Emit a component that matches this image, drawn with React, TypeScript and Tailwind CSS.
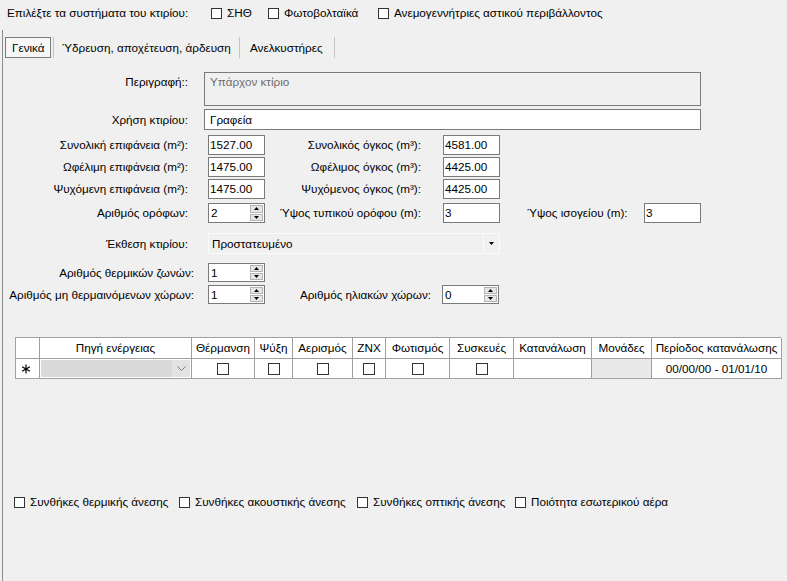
import React from 'react';

const Check: React.FC<{ className?: string }> = ({ className = '' }) => (
  <span className={`inline-block h-[11px] w-[11px] shrink-0 border border-[#333333] bg-white ${className}`} />
);

const CheckItem: React.FC<{ label: string; width: string }> = ({ label, width }) => (
  <div className={`flex items-center ${width}`}>
    <Check />
    <span className="ml-[5px] whitespace-nowrap">{label}</span>
  </div>
);

const TextBox: React.FC<{ value: string; className?: string }> = ({ value, className = '' }) => (
  <div className={`flex h-full items-center border border-[#7a7a7a] bg-white pl-[1px] ${className}`}>
    {value}
  </div>
);

const Spinner: React.FC<{ value: string; className?: string }> = ({ value, className = '' }) => (
  <div className={`flex h-full w-[57px] border border-[#7a7a7a] bg-white ${className}`}>
    <div className="flex flex-1 items-center pl-[2px]">{value}</div>
    <div className="my-[1px] mr-[1px] flex w-[13px] flex-col gap-px">
      <div className="flex flex-1 items-center justify-center border border-[#b4b4b4] bg-[#e6e6e6]">
        <svg width="5" height="3" viewBox="0 0 5 3">
          <path d="M2.5 0L5 3H0z" fill="#000" />
        </svg>
      </div>
      <div className="flex flex-1 items-center justify-center border border-[#b4b4b4] bg-[#e6e6e6]">
        <svg width="5" height="3" viewBox="0 0 5 3">
          <path d="M0 0H5L2.5 3z" fill="#000" />
        </svg>
      </div>
    </div>
  </div>
);

const columns = [
  { title: '', w: 'w-[24px]' },
  { title: 'Πηγή ενέργειας', w: 'w-[152px]' },
  { title: 'Θέρμανση', w: 'w-[63px]' },
  { title: 'Ψύξη', w: 'w-[38px]' },
  { title: 'Αερισμός', w: 'w-[60px]' },
  { title: 'ZNX', w: 'w-[33px]' },
  { title: 'Φωτισμός', w: 'w-[64px]' },
  { title: 'Συσκευές', w: 'w-[64px]' },
  { title: 'Κατανάλωση', w: 'w-[78px]' },
  { title: 'Μονάδες', w: 'w-[60px]' },
  { title: 'Περίοδος κατανάλωσης', w: 'w-[130px]' },
];

const EnergyGrid: React.FC = () => (
  <div className="ml-[12px] w-[766px] border-l border-t border-[#a0a0a0]">
    <div className="flex h-[21px]">
      {columns.map((c, i) => (
        <div
          key={i}
          className={`${c.w} flex shrink-0 items-center justify-center border-b border-r border-[#a0a0a0] bg-white whitespace-nowrap`}
        >
          {c.title}
        </div>
      ))}
    </div>
    <div className="flex h-[20px]">
      <div className="flex w-[24px] shrink-0 items-center justify-center border-b border-r border-[#a0a0a0] bg-white">
        <svg width="10" height="10" viewBox="0 0 10 10" className="-ml-[3px]">
          <path d="M5 0.5V9.5M1.1 2.7L8.9 7.3M1.1 7.3L8.9 2.7" stroke="#000" strokeWidth="1.2" />
        </svg>
      </div>
      <div className="flex w-[152px] shrink-0 border-b border-r border-[#a0a0a0] bg-white p-px">
        <div className="flex flex-1 items-center justify-end bg-[#d9d9d9]">
          <div className="flex h-full w-[18px] items-center justify-center bg-[#e3e3e3]">
            <svg width="9" height="5" viewBox="0 0 9 5">
              <path d="M0.5 0.5L4.5 4.5L8.5 0.5" stroke="#7d7d7d" fill="none" />
            </svg>
          </div>
        </div>
      </div>
      {columns.slice(2, 8).map((c, i) => (
        <div
          key={i}
          className={`${c.w} flex shrink-0 items-center justify-center border-b border-r border-[#a0a0a0] bg-white`}
        >
          <Check className="h-[12px] w-[12px]" />
        </div>
      ))}
      <div className="w-[78px] shrink-0 border-b border-r border-[#a0a0a0] bg-white" />
      <div className="w-[60px] shrink-0 border-b border-r border-[#a0a0a0] bg-[#e8e8e8]" />
      <div className="flex w-[130px] shrink-0 items-center justify-center border-b border-r border-[#a0a0a0] bg-white">
        00/00/00 - 01/01/10
      </div>
    </div>
  </div>
);

export default function App() {
  return (
    <div className="flex h-[581px] w-[787px] flex-col overflow-hidden bg-[#f0f0f0] font-['Liberation_Sans',Arial,sans-serif] text-[11.7px] leading-[14px] text-black">
      {/* systems row */}
      <div className="flex h-[26px] shrink-0 items-center pl-[7px]">
        <span className="w-[204px] whitespace-nowrap">Επιλέξτε τα συστήματα του κτιρίου:</span>
        <CheckItem label="ΣΗΘ" width="w-[57px]" />
        <CheckItem label="Φωτοβολταϊκά" width="w-[110px]" />
        <CheckItem label="Ανεμογεννήτριες αστικού περιβάλλοντος" width="w-[260px]" />
      </div>

      <div className="ml-[2px] mt-[4px] flex flex-1 flex-col border-l border-[#8c8c8c]">
        {/* tabs */}
        <div className="mt-[7px] flex h-[21px]">
          <div className="ml-[2px] flex w-[46px] items-center border border-[#7a7a7a] bg-[#f7f7f7] pl-[6px]">Γενικά</div>
          <div className="ml-[2px] w-px bg-[#c4c4c4]" />
          <div className="flex w-[185px] items-center pl-[8px] whitespace-nowrap">Ύδρευση, αποχέτευση, άρδευση</div>
          <div className="w-px bg-[#c4c4c4]" />
          <div className="flex w-[94px] items-center pl-[10px]">Ανελκυστήρες</div>
          <div className="w-px bg-[#c4c4c4]" />
        </div>

        {/* description */}
        <div className="mt-[14px] flex h-[34px]">
          <div className="w-[185px] pt-[3px] text-right">Περιγραφή::</div>
          <div className="ml-[16px] w-[497px] border border-[#7a7a7a] pl-[5px] pt-[2px] text-[#6d6d6d]">Υπάρχον κτίριο</div>
        </div>

        <div className="mt-[3px] flex h-[21px] items-center">
          <div className="w-[185px] text-right">Χρήση κτιρίου:</div>
          <TextBox value="Γραφεία" className="ml-[16px] w-[497px] pl-[5px]" />
        </div>

        {[
          ['Συνολική επιφάνεια (m²):', '1527.00', 'Συνολικός όγκος (m³):', '4581.00', 'mt-[5px]'],
          ['Ωφέλιμη επιφάνεια (m²):', '1475.00', 'Ωφέλιμος όγκος (m³):', '4425.00', 'mt-[2px]'],
          ['Ψυχόμενη επιφάνεια (m²):', '1475.00', 'Ψυχόμενος όγκος (m³):', '4425.00', 'mt-[2px]'],
        ].map(([l1, v1, l2, v2, mt]) => (
          <div key={l1} className={`${mt} flex h-[20px] items-center`}>
            <div className="w-[185px] text-right">{l1}</div>
            <TextBox value={v1} className="ml-[20px] w-[57px]" />
            <div className="w-[156px] text-right">{l2}</div>
            <TextBox value={v2} className="ml-[22px] w-[57px]" />
          </div>
        ))}

        <div className="mt-[4px] flex h-[20px] items-center">
          <div className="w-[185px] text-right">Αριθμός ορόφων:</div>
          <Spinner value="2" className="ml-[20px]" />
          <div className="w-[156px] whitespace-nowrap text-right">Ύψος τυπικού ορόφου (m):</div>
          <TextBox value="3" className="ml-[22px] w-[57px]" />
          <div className="ml-[27px] w-[117px]">Ύψος ισογείου (m):</div>
          <TextBox value="3" className="w-[57px]" />
        </div>

        <div className="mt-[10px] flex h-[21px] items-center">
          <div className="w-[185px] text-right">Έκθεση κτιρίου:</div>
          <div className="ml-[20px] flex h-full w-[292px] border border-[#fbfbfb] bg-[#f0f0f0]">
            <div className="flex flex-1 items-center pl-[3px]">Προστατευμένο</div>
            <div className="flex w-[16px] items-center justify-center border-l border-[#fbfbfb]">
              <svg width="5" height="3" viewBox="0 0 5 3">
                <path d="M0 0H5L2.5 3z" fill="#000" />
              </svg>
            </div>
          </div>
        </div>

        <div className="mt-[9px] flex h-[19px] items-center">
          <div className="w-[191px] text-right">Αριθμός θερμικών ζωνών:</div>
          <Spinner value="1" className="ml-[14px]" />
        </div>

        <div className="mt-[3px] flex h-[19px] items-center">
          <div className="w-[191px] whitespace-nowrap text-right">Αριθμός μη θερμαινόμενων χώρων:</div>
          <Spinner value="1" className="ml-[14px]" />
          <div className="w-[166px] text-right">Αριθμός ηλιακών χώρων:</div>
          <Spinner value="0" className="ml-[11px]" />
        </div>

        <div className="mt-[33px]">
          <EnergyGrid />
        </div>

        {/* comfort conditions */}
        <div className="ml-[11px] mt-[116px] flex h-[14px] items-center">
          <CheckItem label="Συνθήκες θερμικής άνεσης" width="w-[165px]" />
          <CheckItem label="Συνθήκες ακουστικής άνεσης" width="w-[178px]" />
          <CheckItem label="Συνθήκες οπτικής άνεσης" width="w-[158px]" />
          <CheckItem label="Ποιότητα εσωτερικού αέρα" width="w-[200px]" />
        </div>
      </div>
    </div>
  );
}
